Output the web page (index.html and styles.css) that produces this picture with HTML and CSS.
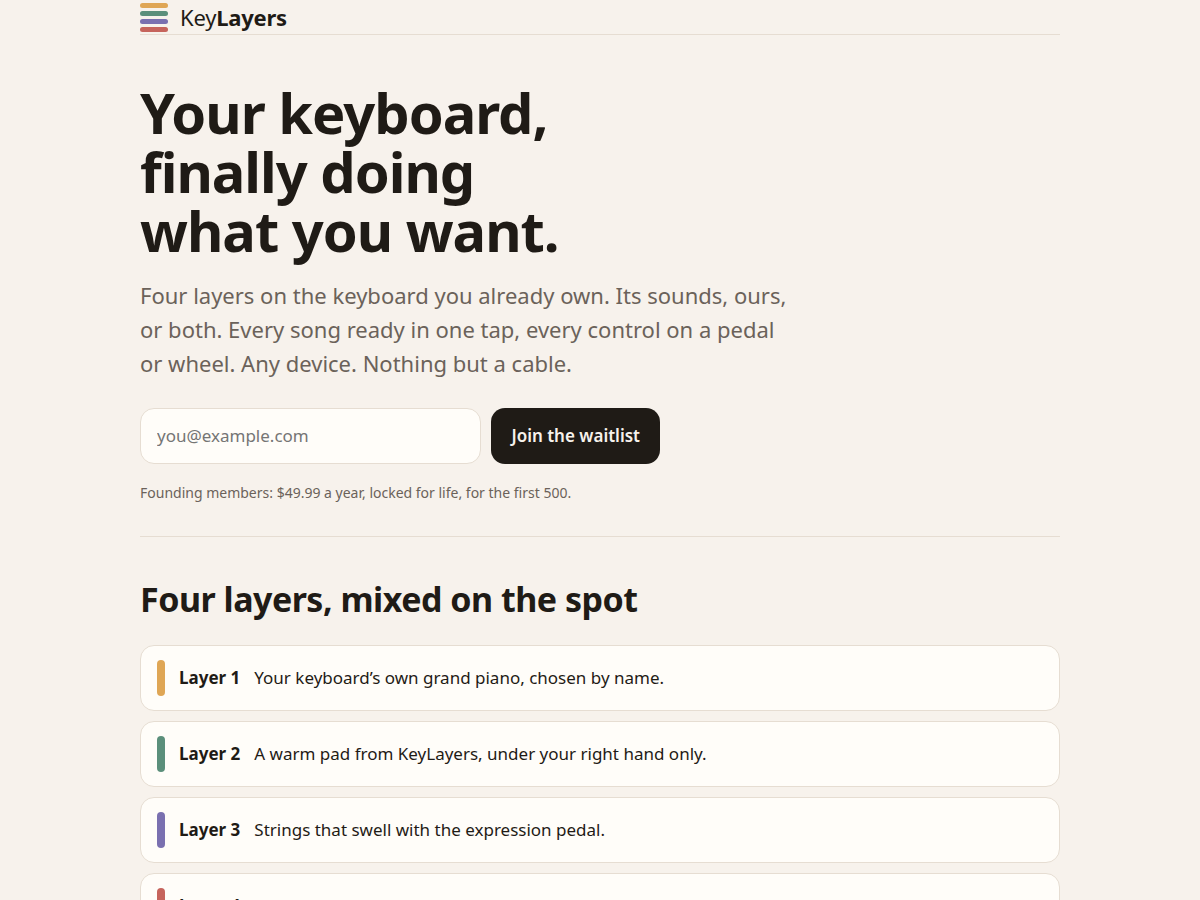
FILE: index.html
```html
<!DOCTYPE html>
<html lang="en">
  <head>
    <meta charset="UTF-8" />
    <meta name="viewport" content="width=device-width, initial-scale=1.0" />
    <title>KeyLayers</title>
    <link rel="stylesheet" href="styles.css">
  </head>
  <body>
    <div class="wrap">
      <header class="top">
        <a class="brand" href="#">
          <svg class="logo" viewBox="0 0 28 29" width="28" height="29" aria-hidden="true">
            <rect class="c1" y="0" width="28" height="5" rx="2.5" />
            <rect class="c2" y="8" width="28" height="5" rx="2.5" />
            <rect class="c3" y="16" width="28" height="5" rx="2.5" />
            <rect class="c4" y="24" width="28" height="5" rx="2.5" />
          </svg>
          <span>Key<b>Layers</b></span>
        </a>
      </header>

      <main>
        <section class="hero">
          <h1>Your keyboard,<br>finally doing<br>what you want.</h1>
          <p class="lede">Four layers on the keyboard you already own. Its sounds, ours, or both. Every song ready in one tap, every control on a pedal or wheel. Any device. Nothing but a cable.</p>
          <form class="signup">
            <input type="email" placeholder="you@example.com" aria-label="Email address" required>
            <button type="submit">Join the waitlist</button>
          </form>
          <p class="note">Founding members: $49.99 a year, locked for life, for the first 500.</p>
        </section>

        <section class="layers">
          <h2>Four layers, mixed on the spot</h2>
          <ul class="stack">
            <li><i class="bar b1"></i><b>Layer 1</b><span>Your keyboard’s own grand piano, chosen by name.</span></li>
            <li><i class="bar b2"></i><b>Layer 2</b><span>A warm pad from KeyLayers, under your right hand only.</span></li>
            <li><i class="bar b3"></i><b>Layer 3</b><span>Strings that swell with the expression pedal.</span></li>
            <li><i class="bar b4"></i><b>Layer 4</b></li>
          </ul>
        </section>
      </main>
    </div>
  </body>
</html>
```

FILE: styles.css
```css
:root {
  --bg: #f7f2ec;
  --card: #fffdf9;
  --ink: #1f1b16;
  --muted: #6b625a;
  --line: #e6ddd2;
  --amber: #dfa655;
  --green: #5b8f7b;
  --violet: #7a70b0;
  --red: #c6645c;
}
* {
  box-sizing: border-box;
}
body {
  margin: 0;
  background: var(--bg);
  color: var(--ink);
  font: 17px/28px "Noto Sans", sans-serif;
}
.wrap {
  max-width: 968px;
  margin: 0 auto;
  padding: 0 24px;
}
.top {
  border-bottom: 1px solid var(--line);
}
.brand {
  display: flex;
  align-items: flex-end;
  gap: 12px;
  padding: 2px 0;
  font-size: 22px;
  line-height: 30px;
  letter-spacing: -0.01em;
  color: inherit;
  text-decoration: none;
}
.c1 { fill: var(--amber); }
.c2 { fill: var(--green); }
.c3 { fill: var(--violet); }
.c4 { fill: var(--red); }

.hero {
  padding: 48px 0 32px;
  border-bottom: 1px solid var(--line);
}
h1 {
  margin: 0 0 18px;
  font-size: 56px;
  line-height: 59px;
  letter-spacing: -1px;
}
.lede {
  max-width: 660px;
  margin: 0 0 28px;
  font-size: 22px;
  line-height: 34px;
  color: var(--muted);
}
.signup {
  display: flex;
  gap: 10px;
  max-width: 520px;
  margin: 0 0 18px;
}
.signup input {
  flex: 1;
  min-width: 0;
  padding: 16px;
  font: inherit;
  line-height: 22px;
  color: var(--ink);
  background: var(--card);
  border: 1px solid var(--line);
  border-radius: 14px;
}
.signup button {
  height: 56px;
  padding: 0 20px;
  font: inherit;
  font-weight: 600;
  color: var(--bg);
  background: var(--ink);
  border: 0;
  border-radius: 14px;
}
.note {
  margin: 0;
  font-size: 14px;
  line-height: 22px;
  color: var(--muted);
}

.layers {
  padding: 40px 0;
}
h2 {
  margin: 0 0 24px;
  font-size: 34px;
  line-height: 44px;
  letter-spacing: -0.015em;
}
.stack {
  display: grid;
  gap: 10px;
  margin: 0;
  padding: 0;
  list-style: none;
}
.stack li {
  display: flex;
  align-items: center;
  gap: 14px;
  padding: 14px 16px;
  background: var(--card);
  border: 1px solid var(--line);
  border-radius: 14px;
}
.bar {
  width: 8px;
  height: 36px;
  border-radius: 4px;
}
.b1 { background: var(--amber); }
.b2 { background: var(--green); }
.b3 { background: var(--violet); }
.b4 { background: var(--red); }
```
